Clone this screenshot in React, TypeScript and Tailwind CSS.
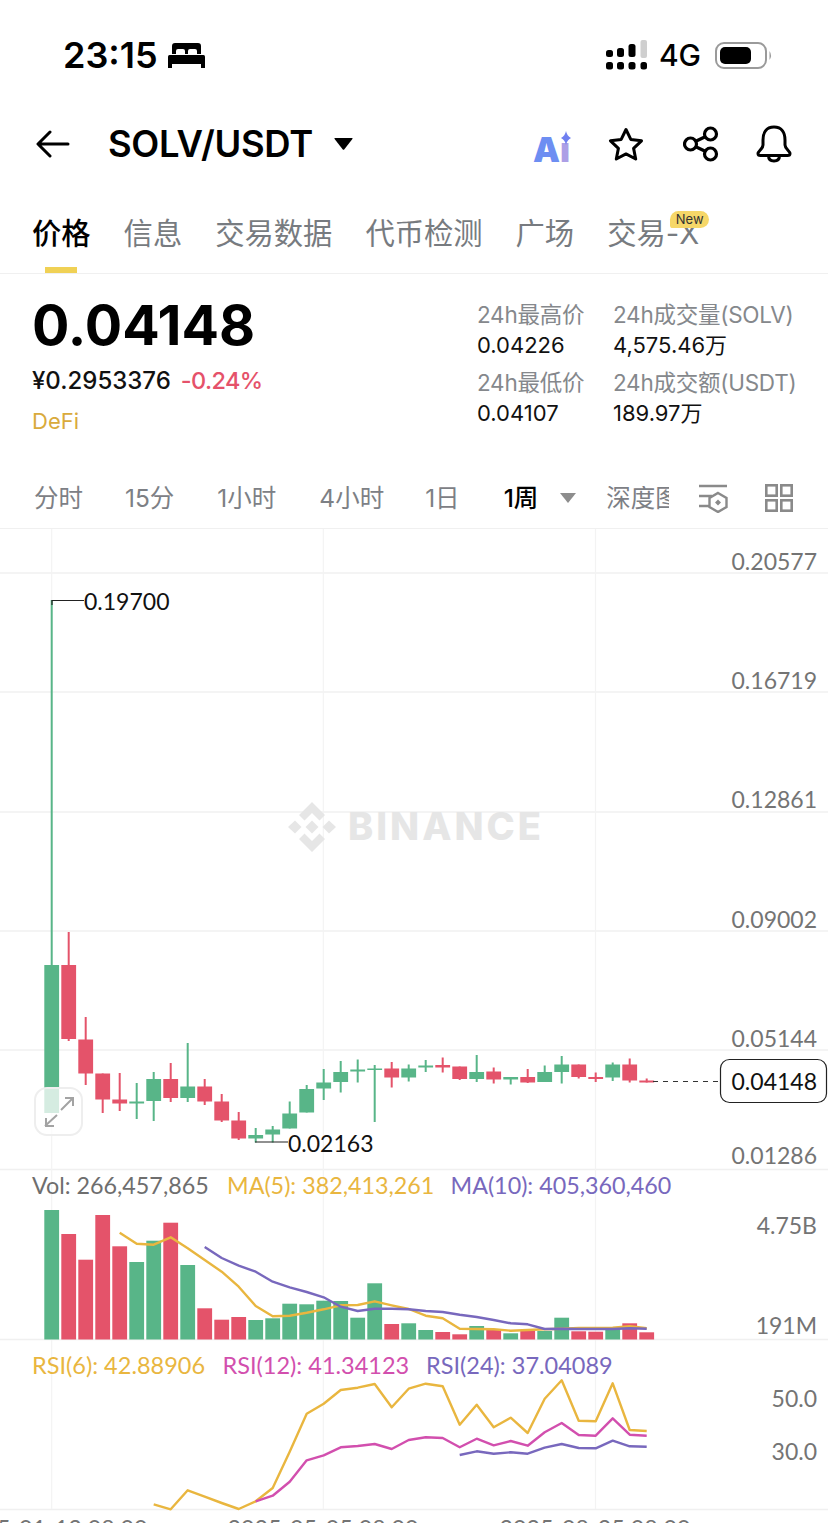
import React from "react";

const GREEN = "#58b588";
const RED = "#e4536a";
const GRID = "#f0f0f0";
const YELLOW = "#e9b63f";
const PURPLE = "#7868bd";
const MAGENTA = "#d24fae";

const cx = (i: number) => 51.7 + 17 * i;

// [up, high, bodyTop, bodyBottom, low]
const candles: [boolean, number, number, number, number][] = [
  [true, 600, 965, 1113, 1113],
  [false, 932, 965, 1039, 1041],
  [false, 1017, 1039.5, 1073.5, 1085],
  [false, 1073.5, 1073.5, 1099.5, 1113],
  [false, 1073, 1099.5, 1103.5, 1111],
  [true, 1083, 1101.5, 1103.5, 1119],
  [true, 1072, 1079, 1101, 1121],
  [false, 1063, 1079, 1098, 1102],
  [true, 1043, 1086.5, 1098, 1102],
  [false, 1079, 1086.5, 1101.5, 1105],
  [false, 1094, 1101.5, 1120.5, 1122],
  [false, 1112, 1120.5, 1138.5, 1140],
  [true, 1128, 1135, 1138.5, 1142.5],
  [true, 1126, 1129.5, 1134.5, 1142.5],
  [true, 1101.5, 1113.5, 1128.5, 1128.5],
  [true, 1085, 1089, 1112.5, 1112.5],
  [true, 1069, 1082.5, 1088.5, 1100],
  [true, 1061, 1072, 1082, 1092.5],
  [true, 1059.5, 1069.5, 1071.5, 1082.5],
  [true, 1065, 1068.5, 1070, 1122],
  [false, 1062, 1068.5, 1077.5, 1087.5],
  [true, 1064.5, 1068.5, 1077.5, 1081.5],
  [true, 1060, 1065.5, 1067.5, 1072],
  [false, 1057.5, 1065, 1067.5, 1072.5],
  [false, 1066.5, 1066.5, 1079, 1080],
  [true, 1055, 1072, 1079, 1082],
  [false, 1067.5, 1071.5, 1079.5, 1083.5],
  [true, 1077, 1077, 1079.5, 1084.5],
  [false, 1069, 1077, 1082.5, 1083],
  [true, 1065.5, 1072, 1082, 1082],
  [true, 1056, 1064.5, 1072, 1083.5],
  [false, 1064.5, 1064.5, 1077, 1078.5],
  [false, 1072.5, 1077, 1079, 1082],
  [true, 1062.5, 1064.5, 1077.5, 1081],
  [false, 1058.5, 1064.5, 1080.5, 1082.5],
  [false, 1078.5, 1080.5, 1082.5, 1082.5],
];

const volumes = [
  1210, 1234, 1259.7, 1215, 1246.3, 1262, 1240.7, 1222.7, 1265, 1308.3, 1319.7, 1317, 1320, 1318.3, 1303.7, 1304.3,
  1300.7, 1301, 1317.7, 1283.3, 1324, 1323.3, 1330, 1332, 1334.3, 1326, 1329.3, 1333.3, 1330.3, 1331, 1317.7, 1331.3,
  1331.7, 1329, 1323.3, 1332.3,
];

const ma5 = [
  188, 221, 224, 202, 235, 270, 305, 350, 408, 439, 437, 428, 418, 406, 405, 394, 406, 417, 437, 445, 476, 477, 478,
  482, 480, 478, 476, 474, 474, 473, 469, 475,
];
const ma10 = [
  231, 264, 287, 305, 335, 352, 366, 382, 410, 423, 416, 416, 418, 423, 426, 434, 441, 450, 460, 463, 477, 476, 477,
  477, 477, 475, 476,
];
const rsi6 = [
  493, 508, 451, 470, 489, 507, 484, 444, 335, 221, 191, 150, 143, 132, 202, 146, 131, 139, 254, 194, 262, 233, 279,
  176, 121, 242, 244, 130, 270, 273,
];
const rsi12 = [
  484, 467, 425, 361, 346, 322, 318, 312, 327, 300, 292, 294, 322, 296, 316, 303, 317, 277, 249, 285, 287, 235, 284,
  287,
];
const rsi24 = [345, 334, 341, 337, 341, 323, 312, 324, 325, 302, 319, 320];

const pts = (vals: number[], start: number, base: number) =>
  vals.map((v, k) => `${cx(start + k).toFixed(1)},${(base + v / 3).toFixed(1)}`).join(" ");

const Line = ({ points, color }: { points: string; color: string }) => (
  <polyline points={points} fill="none" stroke={color} strokeWidth="2.4" strokeLinejoin="round" />
);

const Label = ({ y, children, fill = "#747474" }: { y: number; children: string; fill?: string }) => (
  <text x="817" y={y} textAnchor="end" fill={fill} fontSize="23">
    {children}
  </text>
);

const Chart = () => (
  <svg width="828" height="994" viewBox="0 529 828 994" className="block font-['Lato',sans-serif]">
    {[573, 692, 812, 931, 1050, 1169.5, 1339.5, 1509.5].map((y) => (
      <line key={y} x1="0" x2="828" y1={y} y2={y} stroke={GRID} strokeWidth="1.5" />
    ))}
    {[51.7, 323.3, 595.5].map((x) => (
      <line key={x} x1={x} x2={x} y1="529" y2="1509" stroke="#f3f3f3" strokeWidth="1.2" />
    ))}

    {/* watermark */}
    <g fill="#e6e6e6">
      <path d="M312 802 L325 815 L319.5 820.5 L312 813 L304.5 820.5 L299 815 Z" />
      <path d="M312 852 L299 839 L304.5 833.5 L312 841 L319.5 833.5 L325 839 Z" />
      <path d="M312 820.5 L318.5 827 L312 833.5 L305.5 827 Z" />
      <path d="M295 820.5 L301.5 827 L295 833.5 L288 827 Z" />
      <path d="M329 820.5 L336 827 L329 833.5 L322.5 827 Z" />
      <text x="348" y="840" fontSize="38" fontWeight="800" letterSpacing="3" fontFamily="Inter">
        BINANCE
      </text>
    </g>

    {candles.map(([up, high, top, bottom, low], i) => (
      <g key={i} fill={up ? GREEN : RED}>
        <rect x={cx(i) - 1} y={high} width="2" height={low - high} />
        <rect x={cx(i) - 7.4} y={top} width="14.8" height={Math.max(bottom - top, 1.5)} />
      </g>
    ))}

    <polyline points="84,600.5 52,600.5 52,605" fill="none" stroke="#222" strokeWidth="1.2" />
    <text x="84" y="610" fontSize="23" fill="#111">
      0.19700
    </text>
    <line x1="255" x2="288" y1="1142" y2="1142" stroke="#222" strokeWidth="1.2" />
    <text x="288" y="1152" fontSize="23" fill="#111">
      0.02163
    </text>

    <line x1="653" x2="718" y1="1081.5" y2="1081.5" stroke="#333" strokeWidth="1.2" strokeDasharray="5 5" />
    <rect x="720.5" y="1059.5" width="106" height="43" rx="9" fill="#fff" stroke="#222" strokeWidth="1.2" />
    <text x="817" y="1089.5" textAnchor="end" fontSize="23" fill="#111">
      0.04148
    </text>

    <Label y={569.5}>0.20577</Label>
    <Label y={689}>0.16719</Label>
    <Label y={808}>0.12861</Label>
    <Label y={928}>0.09002</Label>
    <Label y={1046.5}>0.05144</Label>
    <Label y={1164}>0.01286</Label>

    <g fontSize="23.3">
      <text x="32" y="1194" fill="#6e6e6e">
        Vol: 266,457,865
      </text>
      <text x="227" y="1194" fill={YELLOW}>
        MA(5): 382,413,261
      </text>
      <text x="450.5" y="1194" fill={PURPLE}>
        MA(10): 405,360,460
      </text>
    </g>
    <Label y={1234}>4.75B</Label>
    <Label y={1334}>191M</Label>

    {volumes.map((top, i) => (
      <rect
        key={i}
        x={cx(i) - 7.4}
        y={top}
        width="14.8"
        height={1339.5 - top}
        fill={candles[i][0] ? GREEN : RED}
      />
    ))}
    <Line points={pts(ma5, 4, 1170)} color={YELLOW} />
    <Line points={pts(ma10, 9, 1170)} color={PURPLE} />

    <g fontSize="23.5">
      <text x="32" y="1374" fill={YELLOW}>
        RSI(6): 42.88906
      </text>
      <text x="222.5" y="1374" fill={MAGENTA}>
        RSI(12): 41.34123
      </text>
      <text x="426" y="1374" fill={PURPLE}>
        RSI(24): 37.04089
      </text>
    </g>
    <Label y={1407}>50.0</Label>
    <Label y={1460}>30.0</Label>
    <Line points={pts(rsi6, 6, 1340)} color={YELLOW} />
    <Line points={pts(rsi12, 12, 1340)} color={MAGENTA} />
    <Line points={pts(rsi24, 24, 1340)} color={PURPLE} />

    <g fontSize="23.3" fill="#747474" textAnchor="middle">
      <text x="52" y="1537">
        2025-01-13 08:00
      </text>
      <text x="323" y="1537">
        2025-05-05 08:00
      </text>
      <text x="595" y="1537">
        2025-08-25 08:00
      </text>
    </g>
  </svg>
);

const StatusBar = () => (
  <div className="flex h-[110px] items-center justify-between pl-[63px] pr-[55px]">
    <div className="flex items-center gap-[10px]">
      <span className="text-[36px] font-semibold leading-none text-black">23:15</span>
      <svg width="37" height="25" viewBox="0 0 37 25" fill="#000">
        <path d="M4 3 Q4 0 7 0 H30 Q33 0 33 3 V11 H29 V8 Q29 6 27 6 H22 Q20 6 20 8 V11 H17 V8 Q17 6 15 6 H10 Q8 6 8 8 V11 H4 Z" />
        <rect x="0" y="12" width="37" height="9" rx="1.5" />
        <rect x="0" y="20" width="4" height="5" />
        <rect x="33" y="20" width="4" height="5" />
      </svg>
    </div>
    <div className="flex items-center">
      <svg width="42" height="31" viewBox="0 0 42 31" fill="#000">
        <rect x="0" y="10" width="7" height="7" rx="2.5" />
        <rect x="11" y="8" width="7" height="9" rx="2.5" />
        <rect x="22.5" y="4" width="7" height="13" rx="2.5" />
        <rect x="34.5" y="0" width="6.5" height="18" rx="2" fill="#cfcfcf" />
        <rect x="0" y="22" width="7" height="7.5" rx="2.5" />
        <rect x="11" y="22" width="7" height="7.5" rx="2.5" />
        <rect x="22.5" y="22" width="7" height="7.5" rx="2.5" />
        <rect x="34.5" y="22" width="6.5" height="7.5" rx="2.5" />
      </svg>
      <span className="ml-[11px] text-[30px] font-medium leading-none text-black">4G</span>
      <svg className="ml-[14px]" width="58" height="27" viewBox="0 0 58 27">
        <rect x="1" y="1" width="50" height="25" rx="8" fill="none" stroke="#9a9a9a" strokeWidth="2" />
        <rect x="5" y="5" width="31" height="17" rx="5" fill="#000" />
        <path d="M54.5 9 Q57.5 13.5 54.5 18 Z" fill="#9a9a9a" />
      </svg>
    </div>
  </div>
);

const NavBar = () => (
  <div className="flex h-[68px] items-center pl-[36px]">
    <svg width="34" height="30" viewBox="0 0 34 30" fill="none" stroke="#000" strokeWidth="3" strokeLinecap="round" strokeLinejoin="round">
      <path d="M32 15 H3 M14 3 L2 15 L14 27" />
    </svg>
    <span className="ml-[38px] text-[36.4px] font-semibold leading-none tracking-[-0.3px] text-black">SOLV/USDT</span>
    <svg className="ml-[21px]" width="19" height="12" viewBox="0 0 19 12" fill="#000">
      <path d="M1 0 H18 Q19 0 18.4 1 L10.2 11.4 Q9.5 12 8.8 11.4 L0.6 1 Q0 0 1 0 Z" />
    </svg>
    <div className="relative ml-[180px] h-[38px] w-[40px]">
      <span className="absolute left-0 top-[3px] text-[34px] font-black leading-[44px] text-[#6d8ef2]">
        A<span className="text-[#ac9fe6]">ı</span>
      </span>
      <svg className="absolute left-[28px] top-[6px]" width="10" height="14" viewBox="0 0 10 14" fill="#6f7ff0">
        <path d="M5 0 Q6 5 10 7 Q6 9 5 14 Q4 9 0 7 Q4 5 5 0 Z" />
      </svg>
    </div>
    <svg className="ml-[35px]" width="36" height="34" viewBox="0 0 36 34" fill="none" stroke="#000" strokeWidth="3" strokeLinejoin="round">
      <path d="M18 2.5 L22.8 12.4 L33.5 13.8 L25.6 21.4 L27.7 32 L18 26.9 L8.3 32 L10.4 21.4 L2.5 13.8 L13.2 12.4 Z" />
    </svg>
    <svg className="ml-[39px]" width="36" height="36" viewBox="0 0 36 36" fill="none" stroke="#000" strokeWidth="3.2">
      <circle cx="27.5" cy="8" r="6" />
      <circle cx="7.5" cy="18" r="6" />
      <circle cx="27.5" cy="28" r="6" />
      <path d="M12.8 15.3 L22.2 10.7 M12.8 20.7 L22.2 25.3" />
    </svg>
    <svg className="ml-[36px]" width="38" height="38" viewBox="0 0 38 38" fill="none" stroke="#000" strokeWidth="3" strokeLinejoin="round">
      <path d="M19 2 C11 2 8 8 8 15 V20 C8 24 3 26 3 28.5 C3 30 4 30.5 5.5 30.5 H32.5 C34 30.5 35 30 35 28.5 C35 26 30 24 30 20 V15 C30 8 27 2 19 2 Z" />
      <path d="M13.5 30.5 C13.5 34 15.5 36 19 36 C22.5 36 24.5 34 24.5 30.5" />
    </svg>
  </div>
);

const tabs = ["价格", "信息", "交易数据", "代币检测", "广场", "交易-X"];

const Tabs = () => (
  <div className="flex h-[96px] gap-[33px] border-b border-[#f0f0f0] pl-[32px]">
    {tabs.map((t, i) => (
      <div key={t} className="relative flex flex-col items-center justify-between pt-[36px]">
        <span className={`text-[29.3px] leading-[40px] ${i === 0 ? "font-medium text-black" : "text-[#777b80]"}`}>{t}</span>
        {i === 0 && <div className="h-[6px] w-[32px] bg-[#f0d155]" />}
        {t === "交易-X" && (
          <span className="absolute left-[63px] top-[33px] flex h-[17px] w-[39px] items-center justify-center rounded-[9px] rounded-bl-[3px] bg-[#f6d768] text-[13px] leading-none text-[#333]">
            New
          </span>
        )}
      </div>
    ))}
  </div>
);

const Stat = ({ label, value }: { label: string; value: string }) => (
  <div className="flex flex-col">
    <span className="text-[22.5px] leading-[30px] tracking-[-0.25px] text-[#85888c]">{label}</span>
    <span className="text-[22px] leading-[30px] text-[#111]">{value}</span>
  </div>
);

const Info = () => (
  <div className="flex h-[188px]">
    <div className="flex flex-col pl-[32px] pt-[23px]">
      <span className="text-[55.5px] font-bold leading-[56px] text-black">0.04148</span>
      <div className="mt-[12px] flex items-center gap-[10px] leading-[32px]">
        <span className="text-[24px] font-medium text-[#111]">¥0.2953376</span>
        <span className="text-[23.5px] font-medium tracking-[-0.6px] text-[#e5526a]">-0.24%</span>
      </div>
      <span className="mt-[8px] text-[22px] leading-[32px] text-[#d9aa3c]">DeFi</span>
    </div>
    <div className="ml-auto flex w-[351px] pt-[26px]">
      <div className="flex w-[136px] flex-col gap-[8px]">
        <Stat label="24h最高价" value="0.04226" />
        <Stat label="24h最低价" value="0.04107" />
      </div>
      <div className="flex flex-col gap-[8px]">
        <Stat label="24h成交量(SOLV)" value="4,575.46万" />
        <Stat label="24h成交额(USDT)" value="189.97万" />
      </div>
    </div>
  </div>
);

const Intervals = () => (
  <div className="flex h-[67px] items-center border-b border-[#f0f0f0] pl-[34px] pt-[6px] text-[24.5px] leading-none text-[#7d8085]">
    <span>分时</span>
    <span className="ml-[42px]">15分</span>
    <span className="ml-[43px]">1小时</span>
    <span className="ml-[43px]">4小时</span>
    <span className="ml-[41px]">1日</span>
    <span className="ml-[44px] font-medium text-black">1周</span>
    <svg className="ml-[22px]" width="16" height="10" viewBox="0 0 16 10" fill="#8d8d8d">
      <path d="M0 0 H16 L8 10 Z" />
    </svg>
    <span className="ml-[30px] w-[63px] overflow-hidden whitespace-nowrap">深度图</span>
    <svg className="ml-[29px]" width="30" height="30" viewBox="0 0 30 30" fill="none" stroke="#8a8a8a" strokeWidth="2.4">
      <path d="M1 3 H29 M1 13 H14 M1 23 H14" />
      <path d="M20 10 L28.5 15 V24 L20 29 L11.5 24 V15 Z" fill="#fff" />
      <path d="M20 16.5 L23 19.5 L20 22.5 L17 19.5 Z" fill="#8a8a8a" stroke="none" />
    </svg>
    <svg className="ml-[37px]" width="28" height="28" viewBox="0 0 28 28" fill="none" stroke="#8a8a8a" strokeWidth="2.6">
      <rect x="1.3" y="1.3" width="10.4" height="10.4" />
      <rect x="16.3" y="1.3" width="10.4" height="10.4" />
      <rect x="1.3" y="16.3" width="10.4" height="10.4" />
      <rect x="16.3" y="16.3" width="10.4" height="10.4" />
    </svg>
  </div>
);

const App = () => (
  <div className="h-[1523px] w-[828px] overflow-hidden bg-white font-['Inter','Noto_Sans_CJK_SC',sans-serif]">
    <StatusBar />
    <NavBar />
    <Tabs />
    <Info />
    <Intervals />
    <div className="relative">
      <Chart />
      <button className="absolute left-[34px] top-[558px] flex h-[49px] w-[49px] items-center justify-center rounded-[13px] border-2 border-[#eeeeee] bg-white/75">
        <svg width="32" height="32" viewBox="0 0 32 32" fill="none" stroke="#a3a3a3" strokeWidth="2">
          <path d="M2 30 L14 19 M3 22 V30 H11" />
          <path d="M18 14 L30 2 M22 2 H30 V10" />
        </svg>
      </button>
    </div>
  </div>
);

export default App;
